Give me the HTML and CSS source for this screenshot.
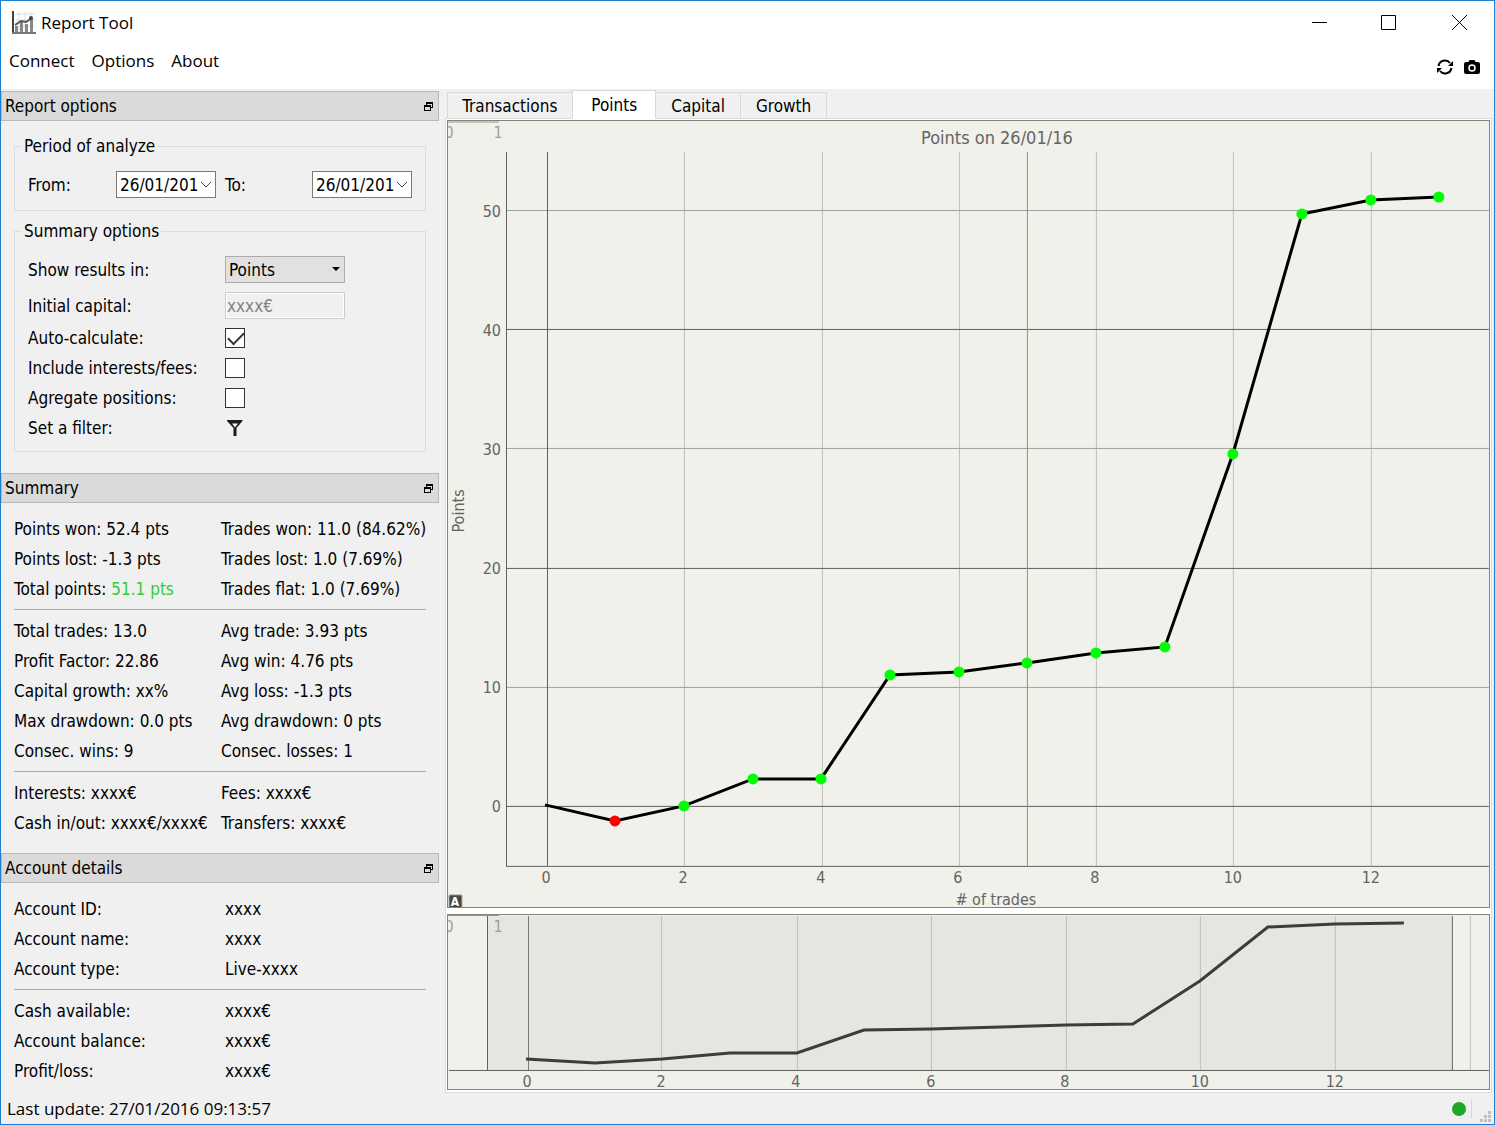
FILE: index.html
```html
<!DOCTYPE html>
<html lang="en">
<head>
    <meta charset="UTF-8">
    <meta name="viewport" content="width=device-width, initial-scale=1.0">
    <title>Report Tool</title>
    <link rel="stylesheet" href="styles.css">
</head>
<body>

<svg class="defs" aria-hidden="true">
    <symbol id="float-icon" viewBox="0 0 9 9">
        <path d="M2 0h7v6H7V5h1V2H3v1H2z"/>
        <path d="M0 3h7v6H0zM1 5v3h5V5z" fill-rule="evenodd"/>
    </symbol>
    <symbol id="chevron" viewBox="0 0 12 8">
        <path d="M1 1l5 5 5-5" fill="none" stroke="#444" stroke-width="1"/>
    </symbol>
</svg>

<div class="window">
    <header class="titlebar">
        <svg class="app-icon" viewBox="0 0 24 24">
            <path d="M4 3h19M4 9h19M4 15h19M7 1v20M13 1v20M19 1v20" stroke="#ddd" fill="none"/>
            <path d="M3 15h3v7H3zM8 11h3v11H8zM13 13h3v9h-3zM18 8h3v14h-3z" fill="#888"/>
            <path d="M3 14l6-4 5 1 6-4" stroke="#555" stroke-width="2" fill="none"/>
            <circle cx="19" cy="7" r="2" fill="#444"/>
            <path d="M1 0v22" stroke="#444" stroke-width="2" fill="none"/>
            <path d="M0 22h24" stroke="#777" stroke-width="2" fill="none"/>
        </svg>
        <h1>Report Tool</h1>
        <div class="window-controls">
            <button aria-label="Minimize"><svg viewBox="0 0 16 16"><path d="M1 7.500h15"/></svg></button>
            <button aria-label="Maximize"><svg viewBox="0 0 16 16"><path d="M.5.500h14v14H.5z"/></svg></button>
            <button aria-label="Close"><svg viewBox="0 0 16 16"><path d="M1 0l15 15M16 0L1 15"/></svg></button>
        </div>
    </header>

    <div class="menubar">
        <nav class="menu">
            <a href="#">Connect</a>
            <a href="#">Options</a>
            <a href="#">About</a>
        </nav>
        <div class="toolbar">
            <button aria-label="Refresh">
                <svg viewBox="0 0 16 16">
                    <path d="M1.500 7A6.500 6.500 0 0 1 13 4M14.500 9A6.500 6.500 0 0 1 3 12" fill="none" stroke="#000" stroke-width="2"/>
                    <path d="M16 2v5h-5zM0 14V9h5z"/>
                </svg>
            </button>
            <button aria-label="Screenshot">
                <svg viewBox="0 0 16 16">
                    <path d="M2 3h2.500l1-2h5l1 2H14a2 2 0 0 1 2 2v8a2 2 0 0 1-2 2H2a2 2 0 0 1-2-2V5a2 2 0 0 1 2-2z"/>
                    <circle cx="8" cy="9" r="3" fill="#000" stroke="#fff" stroke-width="1.500"/>
                </svg>
            </button>
        </div>
    </div>

    <div class="content">
        <aside class="sidebar">
            <section>
                <div class="dock-title">
                    <h2>Report options</h2>
                    <button aria-label="Float report options"><svg><use href="#float-icon"/></svg></button>
                </div>
                <div class="options">
                    <fieldset>
                        <legend>Period of analyze</legend>
                        <div class="period">
                            <label for="from">From:</label>
                            <div class="date">
                                <input type="text" id="from" value="26/01/201">
                                <button aria-label="Pick start date"><svg><use href="#chevron"/></svg></button>
                            </div>
                            <label class="to" for="to">To:</label>
                            <div class="date">
                                <input type="text" id="to" value="26/01/201">
                                <button aria-label="Pick end date"><svg><use href="#chevron"/></svg></button>
                            </div>
                        </div>
                    </fieldset>

                    <fieldset>
                        <legend>Summary options</legend>
                        <div class="field">
                            <label for="results">Show results in:</label>
                            <div class="select">
                                <select id="results">
                                    <option>Points</option>
                                </select>
                            </div>
                        </div>
                        <div class="field">
                            <label for="capital">Initial capital:</label>
                            <input type="text" id="capital" value="xxxx€" disabled>
                        </div>
                        <div class="checks">
                            <div class="check">
                                <label for="auto">Auto-calculate:</label>
                                <input type="checkbox" id="auto" checked>
                            </div>
                            <div class="check">
                                <label for="fees">Include interests/fees:</label>
                                <input type="checkbox" id="fees">
                            </div>
                            <div class="check">
                                <label for="agregate">Agregate positions:</label>
                                <input type="checkbox" id="agregate">
                            </div>
                            <div class="check">
                                <label for="filter">Set a filter:</label>
                                <button id="filter" class="filter">
                                    <svg viewBox="0 0 16 16"><path d="M0 0h15.500v1L9.500 8v8h-3V8L0 1zM5 3.500l3 4 3-4z" fill="#1c1c1c" fill-rule="evenodd"/></svg>
                                </button>
                            </div>
                        </div>
                    </fieldset>
                </div>
            </section>

            <section>
                <div class="dock-title">
                    <h2>Summary</h2>
                    <button aria-label="Float summary"><svg><use href="#float-icon"/></svg></button>
                </div>
                <div class="details">
                    <div class="rows">
                        <span>Points won: 52.4 pts</span><span>Trades won: 11.0 (84.62%)</span>
                        <span>Points lost: -1.3 pts</span><span>Trades lost: 1.0 (7.69%)</span>
                        <span>Total points: <span class="gain">51.1 pts</span></span><span>Trades flat: 1.0 (7.69%)</span>
                    </div>
                    <hr>
                    <div class="rows">
                        <span>Total trades: 13.0</span><span>Avg trade: 3.93 pts</span>
                        <span>Profit Factor: 22.86</span><span>Avg win: 4.76 pts</span>
                        <span>Capital growth: xx%</span><span>Avg loss: -1.3 pts</span>
                        <span>Max drawdown: 0.0 pts</span><span>Avg drawdown: 0 pts</span>
                        <span>Consec. wins: 9</span><span>Consec. losses: 1</span>
                    </div>
                    <hr>
                    <div class="rows">
                        <span>Interests: xxxx€</span><span>Fees: xxxx€</span>
                        <span>Cash in/out: xxxx€/xxxx€</span><span>Transfers: xxxx€</span>
                    </div>
                </div>
            </section>

            <section>
                <div class="dock-title">
                    <h2>Account details</h2>
                    <button aria-label="Float account details"><svg><use href="#float-icon"/></svg></button>
                </div>
                <div class="details account">
                    <div class="rows">
                        <span>Account ID:</span><span>xxxx</span>
                        <span>Account name:</span><span>xxxx</span>
                        <span>Account type:</span><span>Live-xxxx</span>
                    </div>
                    <hr>
                    <div class="rows">
                        <span>Cash available:</span><span>xxxx€</span>
                        <span>Account balance:</span><span>xxxx€</span>
                        <span>Profit/loss:</span><span>xxxx€</span>
                    </div>
                </div>
            </section>
        </aside>

        <main>
            <div class="tabs" role="tablist">
                <button role="tab">Transactions</button>
                <button role="tab" class="active" aria-selected="true">Points</button>
                <button role="tab">Capital</button>
                <button role="tab">Growth</button>
            </div>
            <div class="pane">
                <!-- Points curve -->
                <svg class="chart" viewBox="0 0 1041 786">
                    <g class="stub">
                        <path d="M0 1h51"/>
                        <text x="1" y="17">0</text>
                        <text x="50" y="17">1</text>
                    </g>
                    <text class="title" x="549" y="23">Points on 26/01/16</text>
                    <path class="grid" d="M236.500 31v714M374.500 31v714M511.500 31v714M648.500 31v714M785.500 31v714M923.500 31v714"/>
                    <path class="grid strong" d="M58 89.500h983M58 327.500h983M58 566.500h983"/>
                    <path class="axis" d="M58.500 31v714.500H1041M99.500 31v714M58 208.500h983M58 447.500h983M58 685.500h983"/>
                    <g class="labels y">
                        <text x="53" y="96">50</text>
                        <text x="53" y="215">40</text>
                        <text x="53" y="334">30</text>
                        <text x="53" y="453">20</text>
                        <text x="53" y="572">10</text>
                        <text x="53" y="691">0</text>
                    </g>
                    <g class="labels">
                        <text x="98" y="762">0</text>
                        <text x="235" y="762">2</text>
                        <text x="373" y="762">4</text>
                        <text x="510" y="762">6</text>
                        <text x="647" y="762">8</text>
                        <text x="785" y="762">10</text>
                        <text x="923" y="762">12</text>
                        <text x="548" y="784"># of trades</text>
                        <text transform="translate(16 390) rotate(-90)">Points</text>
                    </g>
                    <polyline class="curve" points="97,684 167,700 236,685 305,658 373,658 442,554 511,551 579,542 648,532 717,526 785,333 854,93 923,79 991,76"/>
                    <g class="wins">
                        <circle class="loss" cx="167" cy="700" r="5.500"/>
                        <circle cx="236" cy="685" r="5.500"/>
                        <circle cx="305" cy="658" r="5.500"/>
                        <circle cx="373" cy="658" r="5.500"/>
                        <circle cx="442" cy="554" r="5.500"/>
                        <circle cx="511" cy="551" r="5.500"/>
                        <circle cx="579" cy="542" r="5.500"/>
                        <circle cx="648" cy="532" r="5.500"/>
                        <circle cx="717" cy="526" r="5.500"/>
                        <circle cx="785" cy="333" r="5.500"/>
                        <circle cx="854" cy="93" r="5.500"/>
                        <circle cx="923" cy="79" r="5.500"/>
                        <circle cx="991" cy="76" r="5.500"/>
                    </g>
                    <path class="cursor" d="M579.500 31v714"/>
                    <g class="auto">
                        <rect x="1" y="774" width="13" height="14" rx="1"/>
                        <text x="7" y="785">A</text>
                    </g>
                </svg>

                <!-- Overview with the visible range shaded -->
                <svg class="chart" viewBox="0 0 1041 174">
                    <rect x="39" y="1" width="965" height="154" fill="#e5e6e1"/>
                    <g class="stub">
                        <path d="M0 .5h51"/>
                        <text x="1" y="17">0</text>
                        <text x="50" y="17">1</text>
                    </g>
                    <path class="grid" d="M213.500 1v154M349.500 1v154M483.500 1v154M618.500 1v154M752.500 1v154M887.500 1v154M1022.500 1v154"/>
                    <path class="axis" d="M1 155.500h1040M39.500 1v154M1004.500 1v154"/>
                    <path class="axis light" d="M80.500 1v154"/>
                    <polyline class="curve muted" points="78,144 147,148 214,144 282,138 349,138 416,115 483,114 618,110 685,109 752,66 820,12 887,9 956,8"/>
                    <g class="labels">
                        <text x="79" y="172">0</text>
                        <text x="213" y="172">2</text>
                        <text x="348" y="172">4</text>
                        <text x="483" y="172">6</text>
                        <text x="617" y="172">8</text>
                        <text x="752" y="172">10</text>
                        <text x="887" y="172">12</text>
                    </g>
                </svg>
            </div>
        </main>
    </div>

    <footer class="statusbar">
        <span>Last update: 27/01/2016 09:13:57</span>
        <i class="status-dot"></i>
        <i class="separator"></i>
        <svg class="grip" viewBox="0 0 11 11">
            <path d="M8 0h3v3H8zM4 4h3v3H4zM8 4h3v3H8zM0 8h3v3H0zM4 8h3v3H4zM8 8h3v3H8z" fill="#bfbfbf"/>
        </svg>
    </footer>
</div>

</body>
</html>
```
FILE: styles.css
```css
* {
    box-sizing: border-box;
}

body {
    margin: 0;
    font-family: "DejaVu Sans Condensed", Tahoma, sans-serif;
    font-size: 17px;
    line-height: 20px;
    color: #000;
}

h1, h2 {
    margin: 0;
    font-size: inherit;
    font-weight: normal;
}

button, input, select {
    margin: 0;
    padding: 0;
    border: none;
    background: none;
    border-radius: 0;
    font: inherit;
    color: inherit;
}

svg {
    display: block;
}

.defs {
    display: none;
}

.window {
    display: flex;
    flex-direction: column;
    min-height: 100vh;
    border: 1px solid #1a80d2;
    background: #f0f0f0;
}

/* Title bar and menu */

.titlebar {
    display: flex;
    align-items: center;
    height: 44px;
    padding-left: 11px;
    background: #fff;
    font-family: "Open Sans", "Segoe UI", sans-serif;
}

.app-icon {
    width: 24px;
    height: 24px;
    margin-right: 5px;
}

.window-controls {
    display: flex;
    margin-left: auto;
}

.window-controls button {
    display: flex;
    align-items: center;
    justify-content: center;
    width: 70px;
    height: 44px;
}

.window-controls svg {
    width: 16px;
    height: 16px;
    fill: none;
    stroke: #000;
}

.menubar {
    display: flex;
    align-items: center;
    justify-content: space-between;
    height: 44px;
    padding: 0 14px 0 8px;
    background: #fff;
}

.menu {
    display: flex;
    gap: 17px;
    align-self: flex-start;
    padding-top: 6px;
    font-family: "Open Sans", "Segoe UI", sans-serif;
}

.menu a {
    color: #000;
    text-decoration: none;
}

.toolbar {
    display: flex;
    gap: 11px;
}

.toolbar svg {
    width: 16px;
    height: 16px;
}

.content {
    display: flex;
    gap: 6px;
    flex: 1;
    padding: 1px 2px 0 0;
}

/* Docks on the left */

.sidebar {
    flex: 0 0 438px;
    padding-top: 1px;
}

.dock-title {
    display: flex;
    align-items: center;
    justify-content: space-between;
    height: 30px;
    padding: 0 5px 0 3px;
    border: 1px solid #b9b9b9;
    background: #dadada;
}

.dock-title svg {
    width: 9px;
    height: 9px;
}

.options {
    padding: 15px 13px 21px;
}

fieldset {
    min-width: 0;
    margin: 0 0 10px;
    padding: 15px 13px 12px;
    border: 1px solid #dcdcdc;
}

fieldset:last-child {
    margin-bottom: 0;
    padding-bottom: 8px;
}

legend {
    margin-left: -6px;
    padding: 0 2px;
}

.period {
    display: grid;
    grid-template-columns: 88px 100px 96px 100px;
    align-items: center;
}

.period .to {
    padding-left: 9px;
}

.date {
    display: flex;
    align-items: center;
    height: 27px;
    border: 1px solid #7a7a7a;
    background: #fff;
}

.date input {
    flex: 1;
    min-width: 0;
    padding-left: 3px;
}

.date button {
    width: 15px;
}

.date svg {
    width: 12px;
    height: 8px;
}

.field, .check {
    display: grid;
    grid-template-columns: 197px 120px;
    align-items: center;
}

.field + .field {
    margin-top: 9px;
}

.field input {
    height: 27px;
    padding: 0 1px;
    border: 1px solid #ccc;
    outline: 1px solid #fff;
    outline-offset: -2px;
    background: #f0f0f0;
    color: #838383;
}

.select {
    position: relative;
}

.select::after {
    content: "";
    position: absolute;
    top: 11px;
    right: 5px;
    border: 4px solid transparent;
    border-top-color: #000;
    border-bottom: none;
    pointer-events: none;
}

.select select {
    display: block;
    width: 100%;
    height: 27px;
    padding-left: 3px;
    border: 1px solid #adadad;
    background: #e1e1e1;
    appearance: none;
}

.checks {
    padding-top: 4px;
}

.check {
    height: 30px;
}

.check input {
    appearance: none;
    width: 20px;
    height: 20px;
    border: 1px solid #333;
    background: #fff;
}

.check input:checked::before {
    content: "";
    display: block;
    width: 14px;
    height: 7px;
    margin: 3px 0 0 2px;
    border: solid #333;
    border-width: 0 0 2px 2px;
    transform: rotate(-45deg);
}

.filter {
    width: 20px;
    padding-left: 2px;
}

.filter svg {
    width: 16px;
    height: 16px;
}

.details {
    padding: 11px 13px 15px;
}

.rows {
    display: grid;
    grid-template-columns: 207px 1fr;
    grid-auto-rows: 30px;
    align-items: center;
    white-space: nowrap;
}

.account .rows {
    grid-template-columns: 211px 1fr;
}

.account {
    padding-bottom: 6px;
}

.details hr {
    margin: 5px 0 6px;
    border: none;
    border-top: 1px solid #a9a9a9;
}

.gain {
    color: #32cd32;
}

/* Tabs and charts */

main {
    flex: 1;
    min-width: 0;
}

.tabs {
    display: flex;
    align-items: flex-end;
    height: 28px;
    padding-left: 2px;
}

.tabs button {
    height: 26px;
    padding: 0 15px;
    border: 1px solid #d9d9d9;
    border-width: 1px 1px 0 0;
}

.tabs button:first-child {
    padding-left: 14px;
    border-left-width: 1px;
}

.tabs .active {
    position: relative;
    height: 29px;
    margin: 0 0 -1px -1px;
    padding: 0 18px 1px;
    border-left-width: 1px;
    background: #fff;
}

.pane {
    display: flex;
    flex-direction: column;
    gap: 6px;
    padding: 1px 1px 2px;
    border: 1px solid #dcdcdc;
    background: #fff;
}

.chart {
    width: 100%;
    height: auto;
    border: 1px solid #82827e;
    background: #f0f1ea;
}

.chart path {
    fill: none;
}

.chart text {
    font-size: 16px;
    text-anchor: middle;
    fill: #646464;
}

.chart .title {
    font-size: 18px;
}

.chart .y text {
    text-anchor: end;
}

.stub path {
    stroke: #969696;
}

.chart .stub text {
    fill: #a0a0a0;
}

.grid {
    stroke: #bfc0bb;
}

.grid.strong {
    stroke: #a0a19c;
}

.axis {
    stroke: #5f5f5d;
}

.axis.light {
    stroke: #787876;
}

.curve {
    fill: none;
    stroke: #000;
    stroke-width: 3;
}

.curve.muted {
    stroke: #3c3c3b;
}

.wins circle {
    fill: #0f0;
}

.wins .loss {
    fill: #f00;
}

.cursor {
    stroke: #f5606e;
}

.auto rect {
    fill: #464646;
    stroke: #aaa;
}

.chart .auto text {
    font-size: 12px;
    font-weight: bold;
    fill: #fff;
}

/* Status bar */

.statusbar {
    display: flex;
    align-items: center;
    height: 31px;
    padding: 0 3px 0 6px;
    font-family: "Open Sans", "Segoe UI", sans-serif;
}

.status-dot {
    width: 14px;
    height: 14px;
    margin-left: auto;
    border-radius: 50%;
    background: #22a628;
}

.separator {
    width: 1px;
    height: 18px;
    margin: 0 8px 0 5px;
    background: #d7d7d7;
}

.grip {
    align-self: flex-end;
    width: 11px;
    height: 11px;
    margin-bottom: 2px;
}
```
